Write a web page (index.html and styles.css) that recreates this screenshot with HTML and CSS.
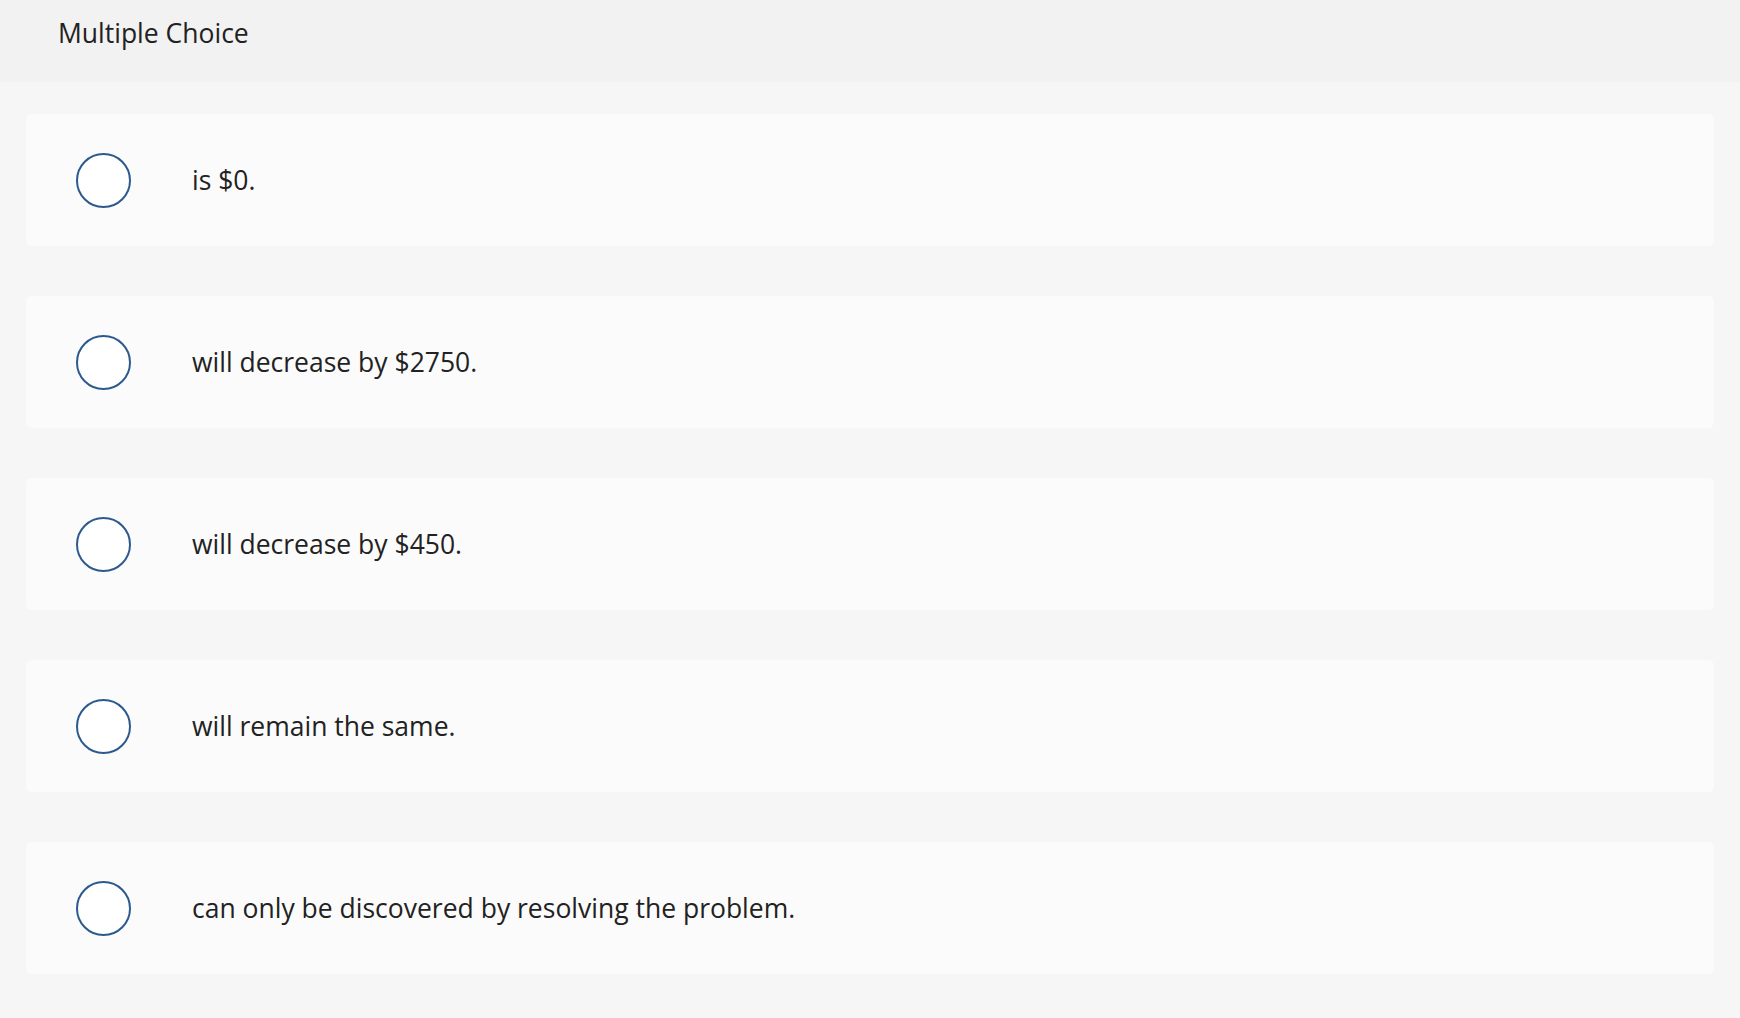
FILE: index.html
```html
<!DOCTYPE html>
<html lang="en">
<head>
<meta charset="utf-8">
<title>Multiple Choice</title>
<link rel="stylesheet" href="styles.css">
</head>
<body>
<header class="header">
  <h1 class="title">Multiple Choice</h1>
</header>
<main class="choices">
  <label class="choice"><span class="radio"></span><span class="choice-text">is $0.</span></label>
  <label class="choice"><span class="radio"></span><span class="choice-text">will decrease by $2750.</span></label>
  <label class="choice"><span class="radio"></span><span class="choice-text">will decrease by $450.</span></label>
  <label class="choice"><span class="radio"></span><span class="choice-text">will remain the same.</span></label>
  <label class="choice"><span class="radio"></span><span class="choice-text">can only be discovered by resolving the problem.</span></label>
</main>
</body>
</html>
```
FILE: styles.css
```css
html, body {
  margin: 0;
  padding: 0;
}
body {
  background: #f6f6f6;
  font-family: "Open Sans", Lato, "Liberation Sans", sans-serif;
  color: #222222;
  width: 1740px;
  height: 1018px;
  overflow: hidden;
}
.header {
  background: #f2f2f2;
  height: 82px;
  box-sizing: border-box;
  padding: 14px 0 0 58px;
}
.title {
  margin: 0;
  font-size: 26.5px;
  font-weight: 400;
  line-height: 38px;
}
.choices {
  display: flex;
  flex-direction: column;
  gap: 50px;
  padding: 32px 26px 0 26px;
}
.choice {
  display: flex;
  align-items: center;
  height: 132px;
  background: #fbfbfb;
  border-radius: 6px;
  padding-left: 50px;
}
.radio {
  width: 55px;
  height: 55px;
  box-sizing: border-box;
  border: 2px solid #2c5a8e;
  border-radius: 50%;
  background: #ffffff;
  flex: none;
}
.choice-text {
  margin-left: 61px;
  font-size: 26.5px;
  line-height: 36px;
}
```
